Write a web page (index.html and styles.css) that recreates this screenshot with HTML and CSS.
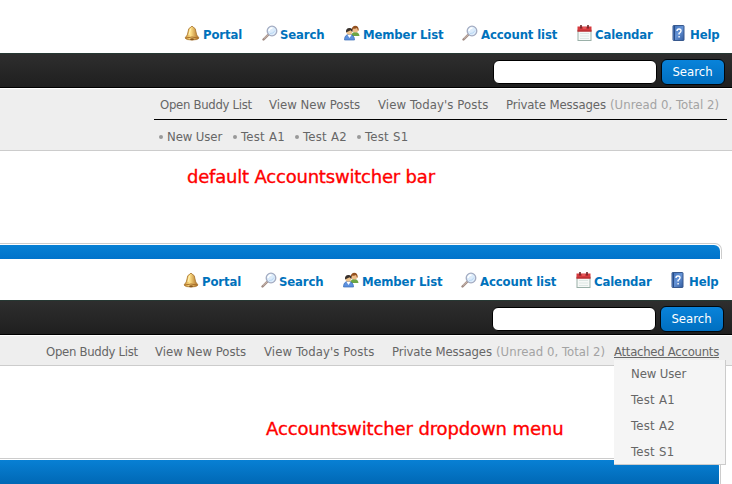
FILE: index.html
```html
<!DOCTYPE html>
<html lang="en">
<head>
<meta charset="utf-8">
<title>Accountswitcher</title>
<link rel="stylesheet" href="styles.css">
</head>
<body>
<svg class="defs" width="0" height="0">
  <defs>
    <linearGradient id="gold"><stop offset="0" stop-color="#c98b2c"/><stop offset=".4" stop-color="#ffe28a"/><stop offset="1" stop-color="#a9661b"/></linearGradient>
    <linearGradient id="book" x2="1" y2="1"><stop offset="0" stop-color="#3f70b8"/><stop offset=".5" stop-color="#6593d6"/><stop offset="1" stop-color="#315a9d"/></linearGradient>
    <symbol id="bell" viewBox="0 0 16 16"><path d="M7 2Q8 0 9 2Q12 3 12 7Q12 10 15 13Q14 15 8 15Q2 15 1 13Q4 10 4 7Q4 3 7 2Z" fill="url(#gold)" stroke="#a87632" stroke-width=".8"/><path d="M2 13Q8 11 14 13" fill="none" stroke="#a9702c"/><path d="M6.5 4Q5.500 7 5 10" fill="none" stroke="#fff2b8"/><ellipse cx="8" cy="14.300" rx="2" ry="1" fill="#8b571e"/></symbol>
    <symbol id="lens" viewBox="0 0 16 16"><path d="M1.500 14.500L6 10" stroke="#a18c84" stroke-width="2.400" stroke-linecap="round"/><path d="M2 13.500L6 9.800" stroke="#d9c9c0" stroke-width=".8"/><circle cx="10" cy="6" r="4.800" fill="#dcecfb" stroke="#a3abc1" stroke-width="1.300"/><path d="M7 6Q7.500 3 10.500 3" fill="none" stroke="#fff" stroke-width="1.500"/><path d="M8 8.500Q11.500 9 13 5.500" fill="none" stroke="#b9d7f4"/></symbol>
    <symbol id="people" viewBox="0 0 16 16"><path d="M7 11Q8 7 11 7Q15 7 15.500 11Z" fill="#6da544"/><circle cx="11.300" cy="4.500" r="3" fill="#eebd89"/><path d="M7.800 6Q7.500 1 11 .8Q15 .8 14.700 6Q13.500 5 13 3Q11 4 9.500 3.500Z" fill="#93501f"/><path d="M.5 15Q.5 9.500 5 9.500Q10.500 9.500 10.500 15Z" fill="#5d91df" stroke="#386bb5" stroke-width=".7"/><path d="M3.500 10L5.500 13L7.500 10Z" fill="#fff"/><circle cx="5.300" cy="6.800" r="2.900" fill="#efc38c"/><path d="M2 7.500Q1.500 3 5.500 3Q9 3 8.500 7Q7 6 6.500 5.200Q4 6.500 2 7.500Z" fill="#39312c"/></symbol>
    <symbol id="calendar" viewBox="0 0 16 16"><rect x="1" y="5" width="13" height="10.500" fill="#f7f9f7" stroke="#9ab0a8"/><path d="M3 8.500H12M3 11H12M3 13.500H12" stroke="#dde7e4"/><rect x=".5" y="1.500" width="14" height="5" fill="#d63a3e"/><path d="M.5 6H14.500" stroke="#a8282b"/><path d="M4 0V3.500M11 0V3.500" stroke="#6d2527" stroke-width="1.600"/><path d="M6 3H9" stroke="#f07575"/></symbol>
    <symbol id="help" viewBox="0 0 16 16"><rect x="2" y=".5" width="11" height="15" rx=".6" fill="url(#book)" stroke="#38598e"/><path d="M3.500 1V15" stroke="#294d87"/><path d="M6 6Q6 4 8 4Q10.200 4 10 6Q9.800 7.200 8.100 8.300V9.500M8.100 11V12.600" fill="none" stroke="#fff" stroke-width="1.400"/></symbol>
  </defs>
</svg>

<section class="panel panel-bar">
  <nav class="top-links">
    <a><svg><use href="#bell"/></svg><span>Portal</span></a>
    <a><svg><use href="#lens"/></svg><span>Search</span></a>
    <a><svg><use href="#people"/></svg><span>Member List</span></a>
    <a><svg><use href="#lens"/></svg><span>Account list</span></a>
    <a><svg><use href="#calendar"/></svg><span>Calendar</span></a>
    <a><svg><use href="#help"/></svg><span>Help</span></a>
  </nav>
  <div class="search-bar"><input type="text" aria-label="Search"><button>Search</button></div>
  <div class="user-panel">
    <div class="user-links"><a class="buddy">Open Buddy List</a><a>View New Posts</a><a class="today">View Today's Posts</a><a class="messages">Private Messages</a><span class="count">(Unread 0, Total 2)</span></div>
    <ul class="accounts"><li>New User</li><li>Test A1</li><li>Test A2</li><li>Test S1</li></ul>
  </div>
  <h2>default Accountswitcher bar</h2>
  <div class="thead"></div>
</section>

<section class="panel panel-menu">
  <nav class="top-links">
    <a><svg><use href="#bell"/></svg><span>Portal</span></a>
    <a><svg><use href="#lens"/></svg><span>Search</span></a>
    <a><svg><use href="#people"/></svg><span>Member List</span></a>
    <a><svg><use href="#lens"/></svg><span>Account list</span></a>
    <a><svg><use href="#calendar"/></svg><span>Calendar</span></a>
    <a><svg><use href="#help"/></svg><span>Help</span></a>
  </nav>
  <div class="search-bar"><input type="text" aria-label="Search"><button>Search</button></div>
  <div class="user-panel">
    <div class="user-links"><a class="buddy">Open Buddy List</a><a>View New Posts</a><a class="today">View Today's Posts</a><a class="messages">Private Messages</a><span class="count">(Unread 0, Total 2)</span><a class="attached">Attached Accounts</a></div>
    <ul class="dropdown"><li>New User</li><li>Test A1</li><li>Test A2</li><li>Test S1</li></ul>
  </div>
  <h2>Accountswitcher dropdown menu</h2>
  <div class="thead"></div>
</section>
</body>
</html>
```
FILE: styles.css
```css
* { box-sizing: border-box; }
body { margin: 0; width: 732px; height: 484px; overflow: hidden; background: #fff; color: #666; font: 13px/16px "DejaVu Sans Condensed", "DejaVu Sans", sans-serif; font-stretch: condensed; }
ul { list-style: none; margin: 0; padding: 0; }
.defs { position: absolute; }
.panel { height: 259px; overflow: hidden; display: flex; flex-direction: column; }
.panel-menu { height: 225px; }
.top-links { flex: none; height: 53px; padding: 25px 0 0 184px; display: grid; grid-template-columns: 78px 82px 118px 115px 94px 61px; align-items: start; }
.top-links a { display: flex; color: #0072bc; font-weight: bold; line-height: 20px; letter-spacing: -.13px; white-space: nowrap; }
.top-links svg { width: 16px; height: 16px; margin-right: 3px; flex: none; }
.top-links a:nth-child(2) span { margin-left: -1px; }
.top-links a:nth-child(5) span { margin-left: -1px; }
.panel-menu .top-links { height: 41px; padding: 13px 0 0 183px; }
.search-bar { flex: none; height: 35px; display: flex; justify-content: flex-end; align-items: center; gap: 4px; padding: 2px 7px 0 0; background: linear-gradient(#2e2e2e, #1f1f1f); border-top: 1px solid #263833; border-bottom: 1px solid #000; }
.panel-menu .search-bar { padding-right: 8px; }
input { width: 164px; height: 24px; margin: 0; border: 1px solid #000; border-radius: 6px; background: #fff; }
button { width: 64px; height: 26px; margin: 0; padding: 1px 1px 0 0; border: 1px solid #00070d; border-radius: 6px; background: linear-gradient(#0983da, #006fc0); color: #fff; font: inherit; line-height: 20px; }
.user-panel { flex: none; height: 63px; background: #eee; border-top: 1px solid #fff; border-bottom: 1px solid #ccc; padding-left: 154px; }
.user-links { width: 573px; height: 31px; padding: 8px 0 0 6px; border-bottom: 1px solid #000; display: grid; grid-template-columns: 109px 109px 128px 104px 118px; white-space: nowrap; }
.buddy { letter-spacing: -.3px; }
.today { letter-spacing: .1px; }
.messages { letter-spacing: -.12px; }
.count { color: #a3a3a3; letter-spacing: .05px; }
.accounts { display: flex; padding: 9px 0 0 5px; }
.accounts li { display: flex; align-items: center; gap: 4px; width: 62px; white-space: nowrap; letter-spacing: .3px; }
.accounts li:first-child { width: 74px; letter-spacing: -.1px; }
.accounts li::before { content: ""; width: 4px; height: 4px; border-radius: 50%; background: #999; }
h2 { margin: 0; flex: none; color: #f00; font: 18px/24px "DejaVu Sans", sans-serif; letter-spacing: -.2px; white-space: nowrap; -webkit-text-stroke: .35px #f00; }
.panel-bar h2 { padding: 14px 0 0 187px; }
.thead { width: 722px; height: 16px; margin-top: auto; flex: none; border: 1px solid #ccc; border-width: 1px 1px 0 0; border-radius: 0 7px 0 0; padding: 1px 1px 0 0; }
.thead::before { content: ""; display: block; height: 100%; border-radius: 0 6px 0 0; background: linear-gradient(#0880d4, #0073cb); }
.panel-menu .user-panel { position: relative; height: 31px; padding-left: 40px; }
.panel-menu .user-links { width: 692px; border: 0; grid-template-columns: 109px 109px 128px 104px 118px 106px; }
.attached { text-decoration: underline; letter-spacing: -.27px; }
.dropdown { position: absolute; left: 614px; top: 24px; width: 112px; height: 105px; padding: 1px 0 0 17px; background: #f5f5f5; border: 1px solid #ccc; border-width: 0 1px 1px 0; z-index: 1; }
.dropdown li { height: 26px; line-height: 26px; letter-spacing: .3px; }
.dropdown li:first-child { letter-spacing: -.1px; }
.panel-menu h2 { padding: 51px 0 0 266px; letter-spacing: -.12px; }
.panel-menu .thead { height: 26px; width: 721px; }
.panel-menu .thead::before { background: linear-gradient(#0880d4, #0068b5); }
```
